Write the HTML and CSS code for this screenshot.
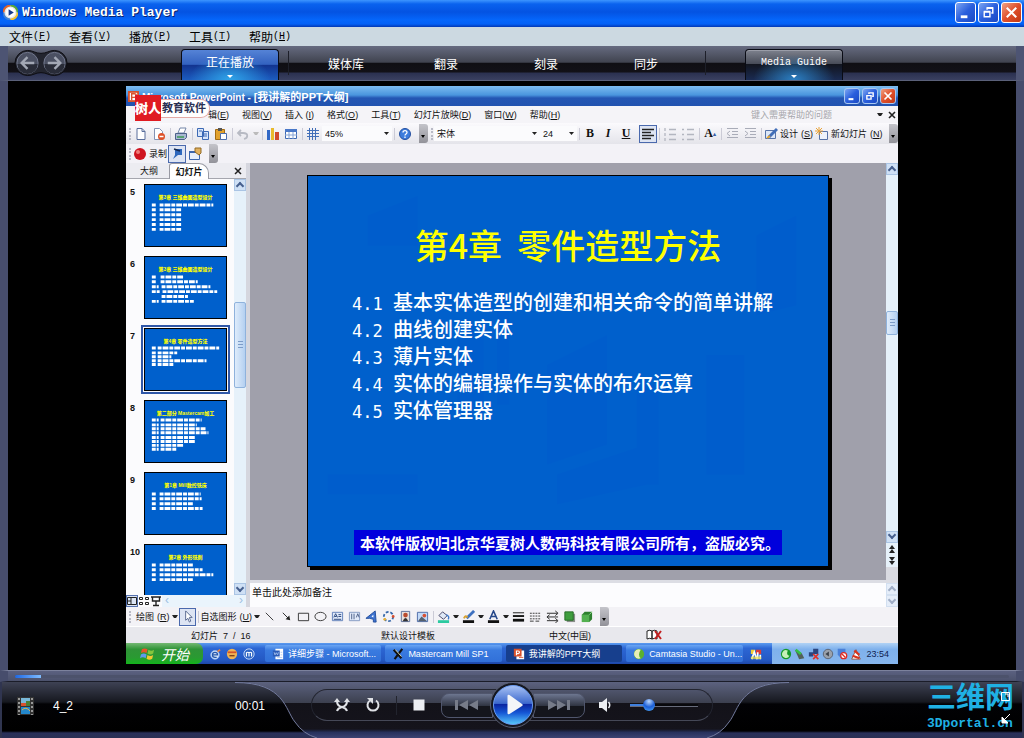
FILE: index.html
```html
<!DOCTYPE html>
<html lang="zh-CN">

<head>
    <meta charset="UTF-8">
    <meta name="viewport" content="width=device-width, initial-scale=1.0">
    <title>Windows Media Player</title>
    <link rel="stylesheet" href="styles.css">
</head>

<body>
    <header class="titlebar">
        <svg class="app-icon" viewBox="0 0 16 16">
            <circle cx="8" cy="8" r="7.5" fill="#e8e8e8" />
            <path d="M8 .5A7.5 7.5 0 0 0 .5 8" fill="none" stroke="#e0652c" stroke-width="2" />
            <path d="M8 .5A7.5 7.5 0 0 1 15.500 8" fill="none" stroke="#58a838" stroke-width="2" />
            <path d="M.5 8a7.500 7.500 0 0 0 7.500 7.500" fill="none" stroke="#3d7fd6" stroke-width="2" />
            <path d="M15.500 8A7.500 7.500 0 0 1 8 15.500" fill="none" stroke="#f0c030" stroke-width="2" />
            <circle cx="8" cy="8" r="5" fill="#fff" />
            <path d="M6 4.500l5.500 3.500L6 11.500z" fill="#173a8c" />
        </svg>
        <h1>Windows Media Player</h1>
        <div class="window-buttons">
            <button aria-label="最小化"><svg viewBox="0 0 20 20"><path d="M5 13h7v3H5z" fill="#fff" /></svg></button>
            <button aria-label="还原"><svg viewBox="0 0 20 20"><path d="M5.500 9.500h6v5h-6zM5 9h7M8.500 7V5.500h6v5H13M8 5h7" fill="none" stroke="#fff" stroke-width="1.500" /></svg></button>
            <button class="close" aria-label="关闭"><svg viewBox="0 0 20 20"><path d="M5 5l10 10M15 5L5 15" stroke="#fff" stroke-width="2.200" /></svg></button>
        </div>
    </header>

    <nav class="menubar">
        <button>文件<span>(<u>F</u>)</span></button>
        <button>查看<span>(<u>V</u>)</span></button>
        <button>播放<span>(<u>P</u>)</span></button>
        <button>工具<span>(<u>T</u>)</span></button>
        <button>帮助<span>(<u>H</u>)</span></button>
    </nav>

    <nav class="features">
        <svg class="history" viewBox="0 0 56 28">
            <path d="M14 1c6 0 8 3 14 3s8-3 14-3a13 13 0 0 1 0 26c-6 0-8-3-14-3s-8 3-14 3a13 13 0 0 1 0-26z" fill="#23252f" stroke="#0c0d12" />
            <circle cx="14" cy="14" r="11" fill="#4b5062" stroke="#757b91" />
            <circle cx="42" cy="14" r="11" fill="#4b5062" stroke="#757b91" />
            <path d="M3.500 15a10.500 10.500 0 0 0 21 0zM31.500 15a10.500 10.500 0 0 0 21 0z" fill="#292c38" />
            <path d="M21 14H8m6-6l-6 6 6 6M35 14h13m-6-6l6 6-6 6" fill="none" stroke="#a3a8b5" stroke-width="2.500" />
        </svg>
        <button class="tab tab-active">正在播放<i></i></button>
        <hr>
        <button class="feature">媒体库</button>
        <button class="feature">翻录</button>
        <button class="feature">刻录</button>
        <button class="feature">同步</button>
        <hr>
        <button class="tab tab-guide">Media Guide<i></i></button>
    </nav>

    <main class="stage">
        <section class="ppt">
            <header class="ppt-title">
                <svg class="ppt-logo" viewBox="0 0 12 12"><path d="M0 0h12v12H0z" fill="#d8532c" /><path d="M2 2h8v8H2z" fill="#fff" /><path d="M4 10V3h3a2 2 0 0 1 0 4H4" fill="none" stroke="#d8532c" stroke-width="1.500" /></svg>
                <h2>Microsoft PowerPoint - <span>[我讲解的PPT大纲]</span></h2>
                <div class="window-buttons small">
                    <button aria-label="最小化"><svg viewBox="0 0 20 20"><path d="M5 13h7v3H5z" fill="#fff" /></svg></button>
                    <button aria-label="还原"><svg viewBox="0 0 20 20"><path d="M5.500 9.500h6v5h-6zM8.500 7V5.500h6v5H13" fill="none" stroke="#fff" stroke-width="2" /></svg></button>
                    <button class="close" aria-label="关闭"><svg viewBox="0 0 20 20"><path d="M5 5l10 10M15 5L5 15" stroke="#fff" stroke-width="2.500" /></svg></button>
                </div>
                <div class="watermark"><b>树人</b><span>教育软件</span></div>
            </header>

            <nav class="ppt-menu">
                <button>辑<span>(<u>E</u>)</span></button>
                <button>视图<span>(<u>V</u>)</span></button>
                <button>插入<span> (<u>I</u>)</span></button>
                <button>格式<span>(<u>O</u>)</span></button>
                <button>工具<span>(<u>T</u>)</span></button>
                <button>幻灯片放映<span>(<u>D</u>)</span></button>
                <button>窗口<span>(<u>W</u>)</span></button>
                <button>帮助<span>(<u>H</u>)</span></button>
                <input class="ask" type="text" placeholder="键入需要帮助的问题" aria-label="键入需要帮助的问题">
                <i class="drop"></i>
                <button class="doc-close" aria-label="关闭窗口"><svg viewBox="0 0 8 8"><path d="M1 1l6 6M7 1L1 7" stroke="#222" stroke-width="1.600" /></svg></button>
            </nav>

            <div class="toolbar">
                <i class="grip"></i>
                <button class="tool" aria-label="新建"><svg viewBox="0 0 14 14"><path d="M3 1.500h5l3 3v8H3z" fill="#fff" stroke="#5a6f9c" /><path d="M8 1.500v3h3" fill="none" stroke="#5a6f9c" /></svg></button>
                <button class="tool" aria-label="权限"><svg viewBox="0 0 14 14"><path d="M2.500 1.500h5l3 3v8h-8z" fill="#fff" stroke="#8493b4" /><circle cx="9.500" cy="9.500" r="3.500" fill="#de5229" /><path d="M7.500 9.500h4" stroke="#fff" stroke-width="1.500" /></svg></button>
                <i class="sep"></i>
                <button class="tool" aria-label="打印"><svg viewBox="0 0 14 14"><path d="M4 6l2-5h6l-2 5z" fill="#fff" stroke="#7486a8" /><path d="M1.500 6.500h11v4l-2 2h-9z" fill="#a9b8d2" stroke="#4c6089" /><path d="M3 10h7" stroke="#3c9a55" stroke-width="1.500" /></svg></button>
                <i class="sep"></i>
                <button class="tool" aria-label="复制"><svg viewBox="0 0 14 14"><path d="M1.500 1.500h6v8h-6zM6.500 4.500h6v8h-6z" fill="#d8e5fa" stroke="#3c69b4" /><path d="M8 7h3M8 9h3M3 4h3" stroke="#3c69b4" /></svg></button>
                <button class="tool" aria-label="粘贴"><svg viewBox="0 0 14 14"><path d="M1.500 2.500h9v10h-9z" fill="#e2a22d" stroke="#a36b12" /><path d="M4 1h4v3H4z" fill="#555" /><path d="M6.500 6.500h6v6h-6z" fill="#fff" stroke="#4c6fae" /></svg></button>
                <i class="sep"></i>
                <button class="tool" aria-label="撤消"><svg viewBox="0 0 14 14"><path d="M2 6h5c6 0 5 5 1 6M5 3L2 6l3 3" fill="none" stroke="#b7bac3" stroke-width="1.800" /></svg></button>
                <i class="drop faded"></i>
                <i class="sep"></i>
                <button class="tool" aria-label="图表"><svg viewBox="0 0 14 14"><path d="M1 3h3v10H1z" fill="#3168c6" /><path d="M5 1h3v12H5z" fill="#e9ba2c" /><path d="M9 5h4v8H9z" fill="#d04a2c" /></svg></button>
                <button class="tool" aria-label="表格"><svg viewBox="0 0 14 14"><path d="M1.500 2.500h11v9h-11z" fill="#fff" stroke="#3e69b2" /><path d="M1 2h12v3H1z" fill="#4a78c8" /><path d="M5 5v7M9 5v7M1 8h12" stroke="#87a5d7" /></svg></button>
                <i class="sep"></i>
                <button class="tool" aria-label="网格"><svg viewBox="0 0 14 14"><path d="M3.500 1v12M6.500 1v12M9.500 1v12M1 3.500h12M1 6.500h12M1 9.500h12" stroke="#426fb8" /></svg></button>
                <select class="zoom" aria-label="显示比例"><option>45%</option></select>
                <i class="sep"></i>
                <button class="tool" aria-label="帮助"><svg viewBox="0 0 14 14"><circle cx="7" cy="7" r="5.500" fill="#3d7ddd" stroke="#244f9f" /><path d="M5 5.500c0-2.500 4-2.500 4 0 0 1.500-2 1.500-2 3M7 9.500V11" fill="none" stroke="#fff" stroke-width="1.300" /></svg></button>
                <i class="more"></i>
                <i class="grip"></i>
                <select class="font" aria-label="字体"><option>宋体</option></select>
                <select class="size" aria-label="字号"><option>24</option></select>
                <i class="sep"></i>
                <button class="tool letter"><b>B</b></button>
                <button class="tool letter"><em>I</em></button>
                <button class="tool letter"><u>U</u></button>
                <button class="tool pressed align" aria-label="左对齐"><svg viewBox="0 0 14 14"><path d="M1 2.500h12M1 5.500h9M1 8.500h12M1 11.500h9" stroke="#222" stroke-width="1.500" /></svg></button>
                <i class="sep"></i>
                <button class="tool" aria-label="编号"><svg viewBox="0 0 14 14"><path d="M6 2.500h7M6 7.500h7M6 12.500h7M2 1v3M2 6v3M2 11v3" stroke="#b3b6c0" stroke-width="1.300" /></svg></button>
                <button class="tool" aria-label="项目符号"><svg viewBox="0 0 14 14"><path d="M6 2.500h7M6 7.500h7M6 12.500h7M1 2.500h2M1 7.500h2M1 12.500h2" stroke="#b3b6c0" stroke-width="1.500" /></svg></button>
                <i class="sep"></i>
                <button class="tool letter" aria-label="增大字号"><b>A</b><sup>▴</sup></button>
                <i class="sep"></i>
                <button class="tool" aria-label="减少缩进"><svg viewBox="0 0 14 14"><path d="M2 1.500h11M7 4.500h6M7 7.500h6M2 10.500h11M5 4L2 6.500 5 9" fill="none" stroke="#a9acb8" /></svg></button>
                <button class="tool" aria-label="增加缩进"><svg viewBox="0 0 14 14"><path d="M2 1.500h11M7 4.500h6M7 7.500h6M2 10.500h11M2 4l3 2.500L2 9" fill="none" stroke="#a9acb8" /></svg></button>
                <i class="sep"></i>
                <button class="tool-text"><svg viewBox="0 0 14 14"><path d="M1.500 3.500h10v8h-10z" fill="#dce7f8" stroke="#5773a8" /><path d="M5 10l8-8" stroke="#416eb8" stroke-width="3" /><path d="M3 11l3-2" stroke="#e3a42f" stroke-width="2" /></svg>设计<span>(<u>S</u>)</span></button>
                <button class="tool-text"><svg viewBox="0 0 14 14"><path d="M4.500 4.500h8v8h-8z" fill="#eef3fc" stroke="#5773a8" /><path d="M4 0v8M0 4h8M1 1l6 6M7 1L1 7" stroke="#e9a43a" /></svg>新幻灯片<span>(<u>N</u>)</span></button>
                <i class="more last"></i>
            </div>

            <div class="record-bar">
                <i class="grip"></i>
                <button class="tool-text"><svg viewBox="0 0 14 14"><circle cx="7" cy="7" r="6" fill="#cf1420" /><circle cx="5" cy="5" r="2" fill="#f07b78" /></svg>录制</button>
                <button class="tool pressed" aria-label="麦克风"><svg viewBox="0 0 14 14"><path d="M5 2h7v6H8L3 12l2-4z" fill="#2e68bd" /><path d="M4 2l6 2" stroke="#13284f" stroke-width="1.500" /></svg></button>
                <button class="tool" aria-label="选项"><svg viewBox="0 0 14 14"><path d="M1.500 4.500h10v8h-10z" fill="#e6eefb" stroke="#3c66ac" /><path d="M1 4h11v2H1z" fill="#3c66ac" /><path d="M7 1h6v5l-2 2-4-3z" fill="#e0b05e" stroke="#936a25" /></svg></button>
                <i class="more"></i>
            </div>

            <div class="workspace">
                <aside class="outline">
                    <div class="outline-tabs">
                        <button>大纲</button>
                        <button class="current">幻灯片</button>
                        <button class="doc-close" aria-label="关闭"><svg viewBox="0 0 8 8"><path d="M1 1l6 6M7 1L1 7" stroke="#222" stroke-width="1.500" /></svg></button>
                    </div>
                    <div class="outline-body">
                        <ol class="thumbs">
                            <li><b>5</b>
                                <div class="thumb">
                                    <h4>第3章 三维曲面造型设计</h4>
                                    <svg viewBox="0 0 83 46"><path d="M7 4h5m3 0h55M7 9h5m3 0h22M7 14h5m3 0h22M7 19h5m3 0h22M7 24h5m3 0h22M7 29h5m3 0h22" /></svg>
                                </div>
                            </li>
                            <li><b>6</b>
                                <div class="thumb">
                                    <h4>第3章 三维曲面造型设计</h4>
                                    <svg viewBox="0 0 83 46"><path d="M7 4h5m4 0h23M7 9h5m4 0h38M7 14h7m3 0h50M7 19h8m3 0h56M17 24h27M7 29h7m3 0h33" /></svg>
                                </div>
                            </li>
                            <li class="selected"><b>7</b>
                                <div class="thumb">
                                    <h4>第4章 零件造型方法</h4>
                                    <svg viewBox="0 0 83 46"><path d="M7 3h4m2 0h63M7 8h4m2 0h20M7 12h4m2 0h14M7 16h4m2 0h50M7 20h4m2 0h16" /></svg>
                                </div>
                            </li>
                            <li><b>8</b>
                                <div class="thumb">
                                    <h4>第二部分 Mastercam加工</h4>
                                    <svg viewBox="0 0 83 46"><path d="M7 3h7m2 0h42M7 8h7m2 0h37M7 12h7m2 0h46M7 16h7m2 0h49M7 21h7m2 0h36M7 25h7m2 0h36M7 29h7m2 0h24M7 33h7m2 0h17" /></svg>
                                </div>
                            </li>
                            <li><b>9</b>
                                <div class="thumb">
                                    <h4>第1章 Mill数控铣床</h4>
                                    <svg viewBox="0 0 83 46"><path d="M7 5h5m3 0h42M7 10h5m3 0h43M7 15h5m3 0h34M7 20h5m3 0h44" /></svg>
                                </div>
                            </li>
                            <li><b>10</b>
                                <div class="thumb">
                                    <h4>第2章 外形铣削</h4>
                                    <svg viewBox="0 0 83 46"><path d="M7 4h5m3 0h34M7 9h5m3 0h44M7 14h5m3 0h55M7 19h5m3 0h34" /></svg>
                                </div>
                            </li>
                        </ol>
                        <div class="scroll">
                            <button class="up" aria-label="向上"></button>
                            <i class="space-a"></i><i class="handle"></i><i class="space-b"></i>
                            <button class="down" aria-label="向下"></button>
                        </div>
                    </div>
                    <div class="views">
                        <button class="on" aria-label="普通视图"><svg viewBox="0 0 12 12"><path d="M1.500 2.500h9v7h-9zM5 2v8M2 6h3" fill="none" stroke="#222" /></svg></button>
                        <button aria-label="浏览视图"><svg viewBox="0 0 12 12"><path d="M1.500 2.500h3v2h-3zM7.500 2.500h3v2h-3zM1.500 7.500h3v2h-3zM7.500 7.500h3v2h-3z" fill="none" stroke="#222" /></svg></button>
                        <button aria-label="放映"><svg viewBox="0 0 12 12"><path d="M1 2h10M2.500 2v4h7V2M6 6v4M3 10.500h6" fill="none" stroke="#222" stroke-width="1.400" /></svg></button>
                        <div class="hscroll"><span>‹</span><span>›</span></div>
                    </div>
                </aside>

                <div class="editor">
                    <div class="canvas-row">
                        <div class="canvas">
                            <article class="slide">
                                <svg class="slide-texture" viewBox="0 0 522 392" preserveAspectRatio="none">
                                    <path d="M150 150h26v90h-26zM190 120h12v110h-12zM240 190l60-30v110l-60 20zM330 210h22v100h-22zM400 180h38v120h-38zM450 60l40-20v90l-40 10zM60 40l50-20v50H60zM250 300l90-30v40l-90 20zM20 300h90v20H20z" />
                                </svg>
                                <h3>第4章  零件造型方法</h3>
                                <ul>
                                    <li><span>4.1 </span>基本实体造型的创建和相关命令的简单讲解</li>
                                    <li><span>4.2 </span>曲线创建实体</li>
                                    <li><span>4.3 </span>薄片实体</li>
                                    <li><span>4.4 </span>实体的编辑操作与实体的布尔运算</li>
                                    <li><span>4.5 </span>实体管理器</li>
                                </ul>
                                <p class="notice">本软件版权归北京华夏树人数码科技有限公司所有，盗版必究。</p>
                            </article>
                        </div>
                        <div class="scroll main-scroll">
                            <button class="up" aria-label="向上"></button>
                            <i class="space-a"></i><i class="handle"></i><i class="space-b"></i>
                            <button class="down" aria-label="向下"></button>
                            <button class="jump" aria-label="上一张"><svg viewBox="0 0 10 10"><path d="M2 5l3-4 3 4zM2 9l3-4 3 4z" fill="#222" /></svg></button>
                            <button class="jump" aria-label="下一张"><svg viewBox="0 0 10 10"><path d="M2 1l3 4 3-4zM2 5l3 4 3-4z" fill="#222" /></svg></button>
                            <i class="stub"></i>
                        </div>
                    </div>
                    <div class="notes">
                        <p>单击此处添加备注</p>
                        <div class="scroll faint">
                            <button class="up" aria-label="向上"></button>
                            <button class="down" aria-label="向下"></button>
                        </div>
                    </div>
                </div>
            </div>

            <div class="draw-bar">
                <i class="grip"></i>
                <button class="tool-text">绘图<span>(<u>R</u>)</span></button><i class="drop"></i>
                <button class="tool pressed" aria-label="选择"><svg viewBox="0 0 14 14"><path d="M5 1v10l2.500-2L9 13l1.500-1L9 8h3z" fill="#fff" stroke="#54648c" /></svg></button>
                <i class="sep"></i>
                <button class="tool-text">自选图形<span>(<u>U</u>)</span></button><i class="drop"></i>
                <button class="tool" aria-label="直线"><svg viewBox="0 0 14 14"><path d="M3 3l8 8" stroke="#333" /></svg></button>
                <button class="tool" aria-label="箭头"><svg viewBox="0 0 14 14"><path d="M3 3l6 6" stroke="#222" /><path d="M11 11L6 10l4-4z" fill="#222" /></svg></button>
                <button class="tool" aria-label="矩形"><svg viewBox="0 0 14 14"><path d="M1.500 3.500h11v8h-11z" fill="none" stroke="#333" /></svg></button>
                <button class="tool" aria-label="椭圆"><svg viewBox="0 0 14 14"><ellipse cx="7" cy="7" rx="6" ry="4.500" fill="none" stroke="#333" /></svg></button>
                <button class="tool" aria-label="文本框"><svg viewBox="0 0 14 14"><path d="M1.500 2.500h11v9h-11z" fill="#e1eafa" stroke="#5e7db8" /><path d="M3 8l2-4 2 4M4 7h2M8 5h3M8 7h3M3 10h8" fill="none" stroke="#26437a" /></svg></button>
                <button class="tool" aria-label="竖排文本框"><svg viewBox="0 0 14 14"><path d="M1.500 2.500h11v9h-11z" fill="#e1eafa" stroke="#8398c0" /><path d="M4 4v6M6.500 4v6M9 8l1.500-4L12 8" fill="none" stroke="#4a5d85" /></svg></button>
                <button class="tool" aria-label="艺术字"><svg viewBox="0 0 14 14"><path d="M1 9L11 1l1 12H9V10L5 9z" fill="#3c72d0" stroke="#234d9a" /><path d="M7 7l2-2v3z" fill="#fff" /></svg></button>
                <button class="tool" aria-label="图示"><svg viewBox="0 0 14 14"><circle cx="7" cy="7" r="5" fill="none" stroke="#3567a9" stroke-width="2" stroke-dasharray="3 2" /><circle cx="12" cy="7" r="1.500" fill="#d84e2e" /><circle cx="3" cy="10" r="1.500" fill="#e9b032" /></svg></button>
                <button class="tool" aria-label="剪贴画"><svg viewBox="0 0 14 14"><path d="M2.500 1.500h9v11h-9z" fill="#e8e0dc" stroke="#5b6f9b" /><circle cx="7" cy="5.500" r="2.500" fill="#b94b2e" /><path d="M4 12q3-7 6 0z" fill="#333" /></svg></button>
                <button class="tool" aria-label="图片"><svg viewBox="0 0 14 14"><path d="M1.500 2.500h11v10h-11z" fill="#c3daf8" stroke="#4c6aa8" /><path d="M2 12l4-5 6 5z" fill="#55606e" /><circle cx="9" cy="6" r="2" fill="#d85134" /></svg></button>
                <i class="sep"></i>
                <button class="tool" aria-label="填充颜色"><svg viewBox="0 0 14 14"><path d="M2 6l4-4 5 4-4 4z" fill="#dfe8f6" stroke="#446" /><path d="M10 5q4 2 2 5" stroke="#3b77c9" stroke-width="1.500" fill="none" /><path d="M1 11h12v3H1z" fill="#2bcaa0" /></svg></button><i class="drop"></i>
                <button class="tool" aria-label="线条颜色"><svg viewBox="0 0 14 14"><path d="M5 9l8-8" stroke="#3d70bf" stroke-width="3" /><path d="M2 9q2-4 4-1" stroke="#daa331" stroke-width="2" fill="none" /><path d="M1 11h12v3H1z" fill="#111" /></svg></button><i class="drop"></i>
                <button class="tool" aria-label="字体颜色"><svg viewBox="0 0 14 14"><path d="M3 10l4-9 4 9M4.500 7h5" fill="none" stroke="#26488a" stroke-width="1.700" /><path d="M1 11h12v3H1z" fill="#111" /></svg></button><i class="drop"></i>
                <button class="tool" aria-label="线型"><svg viewBox="0 0 14 14"><path d="M1 3h12" stroke="#111" /><path d="M1 6.500h12" stroke="#111" stroke-width="2" /><path d="M1 11h12" stroke="#111" stroke-width="3" /></svg></button>
                <button class="tool" aria-label="虚线"><svg viewBox="0 0 14 14"><path d="M1 3.500h12M1 6.500h12M1 9.500h12" stroke="#333" stroke-dasharray="2 1" /><path d="M1 12h12" stroke="#333" stroke-dasharray="4 2" /></svg></button>
                <button class="tool" aria-label="箭头样式"><svg viewBox="0 0 14 14"><path d="M1 3.500h11M2 7.500h11M1 11.500h11M10 1l3 2.500L10 6M4 5L1 7.500 4 10M10 9l3 2.500-3 2.500" fill="none" stroke="#222" /></svg></button>
                <button class="tool" aria-label="阴影"><svg viewBox="0 0 14 14"><path d="M4 4h9v9H4z" fill="#8b8f8b" /><path d="M2 2h9v9H2z" fill="#3f9d3e" stroke="#236a24" /></svg></button>
                <button class="tool" aria-label="三维"><svg viewBox="0 0 14 14"><path d="M2 5l3-3h8v8l-3 3H2z" fill="#2d7f2e" /><path d="M2 5h8v8H2z" fill="#53b050" /><path d="M10 5l3-3" stroke="#9ada95" /></svg></button>
                <i class="more"></i>
            </div>

            <footer class="status">
                <span>幻灯片  7  /  16</span>
                <span>默认设计模板</span>
                <span>中文(中国)</span>
                <svg viewBox="0 0 16 12"><path d="M1 2q3-1.500 5 0v8q-2-1.500-5 0zM6 2q3-1.500 5 0v8q-2-1.500-5 0z" fill="#fff" stroke="#222" /><path d="M9 2l6 8M15 2L9 10" stroke="#c21f1f" stroke-width="2" /></svg>
            </footer>

            <footer class="taskbar">
                <button class="start"><svg viewBox="0 0 16 14"><path d="M2 2q3-2 6 0L7 6Q4 4 1 6z" fill="#e8552b" /><path d="M9 2.500q3 2 6 0l-1 4q-3 2-6 0z" fill="#84c63d" /><path d="M1 7.500q3-2 6 0l-1 4q-3-2-6 0z" fill="#5f9bf0" /><path d="M8 8q3 2 6 0l-1 4q-3 2-6 0z" fill="#f3c832" /></svg>开始</button>
                <div class="quick">
                    <svg viewBox="0 0 14 14"><circle cx="7" cy="8" r="5" fill="#dce9fb" stroke="#8fb8f0" /><path d="M4 8h6q0-3-3-3T4 8q0 3 3 3h2" fill="none" stroke="#2558ad" stroke-width="1.500" /><path d="M10 4l3-2" stroke="#f0803a" stroke-width="2" /></svg>
                    <svg viewBox="0 0 14 14"><circle cx="7" cy="7" r="6" fill="#f0b352" /><path d="M2 4h10v2H2z" fill="#d4532a" /><path d="M4 9h6" stroke="#7a3a14" stroke-width="1.500" /></svg>
                    <svg viewBox="0 0 14 14"><circle cx="7" cy="7" r="6" fill="#2f66c4" stroke="#dce9ff" /><path d="M4 10V5.500q1.500-1 3 0V10M7 5.500q1.500-1 3 0V10" fill="none" stroke="#fff" stroke-width="1.300" /></svg>
                </div>
                <div class="tasks">
                    <button><svg viewBox="0 0 14 14"><path d="M4 1h9v12H4z" fill="#fff" /><path d="M1 3h8v7H1z" fill="#2b5cb8" /><path d="M2.500 5l1 3L5 5.500 6.500 8l1-3M10 5h2M10 8h2M6 11h6" fill="none" stroke="#aac4f0" /></svg>详细步骤 - Microsoft...</button>
                    <button><svg viewBox="0 0 14 14"><path d="M2 2l9 10M12 1L3 13" stroke="#111" stroke-width="2.500" /><path d="M4 2l7 8" stroke="#e9e2a8" /></svg>Mastercam Mill SP1</button>
                    <button class="active"><svg viewBox="0 0 14 14"><path d="M4 3h9v10H4z" fill="#fff" /><path d="M1 1h9v9H1z" fill="#d9532d" /><path d="M4 8.500v-5h2a1.500 1.500 0 0 1 0 3H4" fill="none" stroke="#fff" stroke-width="1.300" /><path d="M7 11h5" stroke="#d9532d" /></svg>我讲解的PPT大纲</button>
                    <button><svg viewBox="0 0 14 14"><circle cx="7" cy="7" r="6" fill="#5bb12f" /><path d="M9 2a5.500 5.500 0 1 0 0 10q-4-4 0-10z" fill="#e7efb8" /></svg>Camtasia Studio - Un...</button>
                </div>
                <svg class="lang" viewBox="0 0 14 14"><path d="M1 2h5v5H1z" fill="#f2cf36" /><path d="M7 2h6v5H7z" fill="#dc3b34" /><path d="M2 13l3-8 3 8M9 5v8M12 8v5" fill="none" stroke="#fff" stroke-width="2" /><path d="M1 10h12v3H1z" fill="#f0e042" opacity=".7" /></svg>
                <div class="tray">
                    <svg viewBox="0 0 14 14"><circle cx="7" cy="7" r="6" fill="#159a28" /><path d="M9 3a4.500 4.500 0 1 0 2 6q-4 0-2-6z" fill="#c6f0b8" /></svg>
                    <svg viewBox="0 0 14 14"><path d="M1 2l8 4 3 6-6 1z" fill="#53605a" /><path d="M2 2l6 5" stroke="#34c045" stroke-width="3" /></svg>
                    <svg viewBox="0 0 14 14"><path d="M1 5h5v5H1zM6 1h6v6H6z" fill="#2b457f" /><path d="M6 7l6 6M12 7l-6 6" stroke="#e03228" stroke-width="2" /></svg>
                    <svg viewBox="0 0 14 14"><circle cx="7" cy="7" r="5.500" fill="#9aa1ab" stroke="#565e6b" /><path d="M4 7l4-3v6z" fill="#3b414a" /></svg>
                    <svg viewBox="0 0 14 14"><path d="M2 1h9v7l-4 5-5-5z" fill="#4a80d8" /><circle cx="9" cy="9" r="3.500" fill="#fff" stroke="#de2c23" stroke-width="1.500" /><path d="M7 7l4 4" stroke="#de2c23" stroke-width="1.500" /></svg>
                    <svg viewBox="0 0 14 14"><path d="M2 13l5-11 5 11z" fill="#fff" stroke="#8a4a3a" /><path d="M5 3l6 5M3 9l8 3" stroke="#d8341f" stroke-width="2.500" /></svg>
                    <time>23:54</time>
                </div>
            </footer>
        </section>
    </main>

    <div class="seek"><input type="range" min="0" max="100" value="3" aria-label="进度"></div>

    <footer class="deck">
        <svg class="deck-shape" viewBox="0 0 554 56">
            <defs>
                <linearGradient id="deckFill" x1="0" y1="0" x2="0" y2="1">
                    <stop offset="0" stop-color="#5c627f" />
                    <stop offset=".37" stop-color="#3c404f" />
                    <stop offset=".38" stop-color="#131219" />
                    <stop offset=".84" stop-color="#15141c" />
                    <stop offset=".9" stop-color="#27315c" />
                    <stop offset="1" stop-color="#3c4372" />
                </linearGradient>
            </defs>
            <path d="M0 0C50 0 50 28 60 40Q68 52 82 56H472Q486 52 494 40C504 28 504 0 554 0z" fill="url(#deckFill)" />
            <path d="M0 .5C50 .5 50 28 60 40Q68 52 82 56M472 56Q486 52 494 40C504 28 504 .5 554 .5" fill="none" stroke="#737b9e" />
        </svg>
        <div class="now">
            <svg viewBox="0 0 17 18"><path d="M0 0h17v18H0z" fill="#333" /><path d="M4 1h9v8H4z" fill="#79b8d8" /><path d="M4 10h9v7H4z" fill="#2387cc" /><path d="M4 6h5v3H4z" fill="#d9512e" /><path d="M9 4h4v5H9z" fill="#4a7c36" /><path d="M5 13q4-4 8 1" fill="none" stroke="#d8b052" /><path d="M2 1v17M15 1v17" stroke="#999" stroke-width="2" stroke-dasharray="2 2" /></svg>
            <span>4_2</span>
            <time>00:01</time>
        </div>
        <div class="transport">
            <button class="plain" aria-label="无序播放"><svg viewBox="0 0 20 20"><path d="M5 6q0 5 5 6 4 1 5 4M15 6q0 5-5 6-4 1-5 4" fill="none" stroke="#dfe1e6" stroke-width="2" /><path d="M2 7l3-4 3 4zM12 7l3-4 3 4z" fill="#dfe1e6" /></svg></button>
            <button class="plain" aria-label="重复"><svg viewBox="0 0 20 20"><path d="M13 5.500a5.500 5.500 0 1 1-6 0" fill="none" stroke="#dfe1e6" stroke-width="2" /><path d="M4 3h6v6z" fill="#dfe1e6" /></svg></button>
            <i class="split"></i>
            <button class="plain" aria-label="停止"><svg viewBox="0 0 20 20"><path d="M4.500 4.500h11v11h-11z" fill="#eceef2" /></svg></button>
            <button class="skip prev" aria-label="上一个"><svg viewBox="0 0 24 12"><path d="M0 1h3v10H0zM13 1v10L4 6zM23 1v10l-9-5z" fill="#777c89" /></svg></button>
            <button class="play" aria-label="播放">
                <svg viewBox="0 0 46 46">
                    <defs>
                        <linearGradient id="orb" x1="0" y1="0" x2="0" y2="1">
                            <stop offset="0" stop-color="#a9c3f5" />
                            <stop offset=".46" stop-color="#3c68cd" />
                            <stop offset=".48" stop-color="#0a24a0" />
                            <stop offset=".7" stop-color="#1657d5" />
                            <stop offset="1" stop-color="#58cbfb" />
                        </linearGradient>
                    </defs>
                    <circle cx="23" cy="23" r="22.500" fill="#151720" stroke="#5b6075" />
                    <circle cx="23" cy="23" r="19.500" fill="url(#orb)" stroke="#6b9bf0" />
                    <path d="M17.500 14q0-2 2-1L32 22q1.500 1 0 2l-12.500 8q-2 1-2-1z" fill="#f4f5f8" />
                </svg>
            </button>
            <button class="skip next" aria-label="下一个"><svg viewBox="0 0 24 12"><path d="M1 1v10l9-5zM10 1v10l9-5zM20 1h3v10h-3z" fill="#777c89" /></svg></button>
            <button class="plain volume-icon" aria-label="静音"><svg viewBox="0 0 20 20"><path d="M4 7h3l5-4v14l-5-4H4z" fill="#eceef2" /><path d="M13.500 7q2.500 3 0 6" fill="none" stroke="#eceef2" stroke-width="1.500" /></svg></button>
            <input class="volume" type="range" min="0" max="100" value="24" aria-label="音量">
        </div>
        <div class="brand">
            <strong>三维网</strong>
            <span>3Dportal.cn</span>
            <svg viewBox="0 0 12 34"><path d="M1.500 1.500h8v8h-8zM5 3h3v3" fill="none" stroke="#fff" /><path d="M10 23l-6 6M2 26v6h6z" fill="#fff" stroke="#fff" /></svg>
        </div>
    </footer>
</body>

</html>
```

FILE: styles.css
```css
* {
    box-sizing: border-box;
}

body {
    margin: 0;
    height: 100vh;
    min-height: 600px;
    display: flex;
    flex-direction: column;
    overflow: hidden;
    background-color: #000;
    font-family: "Liberation Sans", "Noto Sans CJK SC", sans-serif;
    font-size: 12px;
}

button,
input,
select {
    font: inherit;
    color: inherit;
    margin: 0;
    padding: 0;
    border: none;
    background: none;
    border-radius: 0;
}

button {
    display: flex;
    align-items: center;
    justify-content: center;
    white-space: nowrap;
}

h1, h2, h3, h4, p, ul, ol {
    margin: 0;
    padding: 0;
    list-style: none;
}

svg {
    display: block;
    flex: none;
}

/* Player window */
.titlebar {
    display: flex;
    align-items: center;
    flex: none;
    height: 27px;
    padding: 0 2px 2px 3px;
    color: white;
    background: linear-gradient(#3d95ff 0, #0a62ee 4px, #0453e2 12px, #0566fb 20px, #0461f6 24px, #0338b4 27px);
}

.app-icon {
    width: 15px;
    height: 15px;
}

.titlebar h1 {
    flex: 1;
    margin-left: 4px;
    font-family: "Liberation Mono", monospace;
    font-size: 13px;
    text-shadow: 1px 1px 0 #06256e;
}

.window-buttons {
    display: flex;
    gap: 2px;
}

.window-buttons button {
    width: 21px;
    height: 21px;
    border: 1px solid #fff;
    border-radius: 3px;
    background: linear-gradient(135deg, #7da6f2, #2a5fdd 50%, #1a49c4);
}

.window-buttons .close {
    background: linear-gradient(135deg, #f0a284, #e0502c 50%, #c03814);
}

.window-buttons svg {
    width: 19px;
    height: 19px;
}

.menubar {
    display: flex;
    flex: none;
    height: 19px;
    padding-left: 9px;
    background-color: #ccd9e1;
}

.menubar button {
    width: 60px;
    justify-content: flex-start;
}

.menubar span {
    font-family: "Liberation Mono", monospace;
    font-size: 10px;
}

.features {
    display: flex;
    align-items: center;
    flex: none;
    height: 35px;
    padding-left: 6px;
    color: white;
    border: solid #4d5473;
    border-width: 0 8px;
    border-bottom: 1px solid #5a6079;
    background: linear-gradient(#666b80, #40434f 48%, #0f0e13 50%, #121117 76%, #2b3150 80%, #3a4060);
}

.features hr {
    width: 1px;
    height: 24px;
    margin: 0;
    border: none;
    background-color: #1d1f29;
}

.history {
    width: 54px;
    height: 28px;
}

.tab {
    flex-direction: column;
    align-self: flex-end;
    width: 98px;
    height: 31px;
    gap: 4px;
    padding-top: 5px;
    border: 1px solid #090b14;
    border-bottom: none;
    border-radius: 4px 4px 0 0;
    line-height: 16px;
}

.tab i {
    width: 0;
    border: 3px solid transparent;
    border-top: 3px solid #fff;
}

.tab-active {
    margin: 0 9px 0 113px;
    background: radial-gradient(ellipse at bottom, #2fa4e8, transparent 60%), linear-gradient(#5583d6, #3362c0 48%, #12338f 50%, #1c5cc0);
}

.tab-guide {
    margin-left: 39px;
    font-family: "Liberation Mono", monospace;
    font-size: 10px;
    box-shadow: inset 0 1px 0 #9a9da8;
    background: radial-gradient(ellipse at bottom, #2b7fc2, transparent 60%), linear-gradient(#7e828e, #484c58 46%, #12151f 48%, #1a2b52);
}

.feature {
    width: 100px;
    height: 30px;
}

.features hr + .feature {
    margin-left: 7px;
}

.feature + hr {
    margin-left: 9px;
}

.stage {
    display: flex;
    flex: 1;
    min-height: 0;
    padding: 5px 118px 6px;
    border: solid #474d6c;
    border-width: 0 8px;
    background-color: #000;
}

/* PowerPoint window shown in the video */
.ppt {
    display: flex;
    flex-direction: column;
    flex: 1;
    min-width: 0;
    color: #111;
    background-color: #f5f4f8;
    font-size: 9px;
}

.ppt-title {
    position: relative;
    display: flex;
    align-items: center;
    flex: none;
    height: 20px;
    padding: 0 2px;
    color: white;
    background: linear-gradient(#7dbcf0, #4a95de 45%, #2456b4 60%, #2253b0);
}

.ppt-logo {
    width: 11px;
    height: 11px;
}

.ppt-title h2 {
    flex: 1;
    margin-left: 3px;
    font-size: 10px;
}

.ppt-title h2 span {
    font-size: 11px;
}

.window-buttons.small button {
    width: 16px;
    height: 16px;
    border-color: #a9c8f2;
}

.window-buttons.small svg {
    width: 14px;
    height: 14px;
}

/* Publisher badge over the first menus */
.watermark {
    position: absolute;
    left: 9px;
    top: 9px;
    display: flex;
    align-items: center;
    height: 26px;
}

.watermark b {
    width: 26px;
    height: 26px;
    font-family: "Noto Sans CJK SC", sans-serif;
    font-size: 13px;
    font-weight: 900;
    line-height: 25px;
    text-align: center;
    white-space: nowrap;
    background-color: #e01b22;
}

.watermark span {
    padding: 0 3px 0 1px;
    border: 1px solid #e4aaa5;
    border-left: none;
    border-radius: 0 9px 9px 0;
    color: #2a2f52;
    background-color: #fff;
    font-size: 11px;
    font-weight: bold;
    line-height: 17px;
}

.ppt-menu {
    display: flex;
    align-items: center;
    flex: none;
    height: 17px;
    padding: 0 2px 0 82px;
}

.ppt-menu button {
    margin-right: 13px;
}

.ppt span {
    white-space: pre;
}

.ask {
    flex: 1;
    min-width: 0;
    text-align: right;
    margin-right: 44px;
}

.ask::placeholder {
    color: #a5a6ab;
}

.ppt-menu .doc-close {
    margin: 0 0 0 4px;
}

.doc-close svg {
    width: 8px;
    height: 8px;
}

.toolbar,
.record-bar,
.draw-bar {
    display: flex;
    align-items: center;
    flex: none;
    background: linear-gradient(#fbfafd, #e4e4ea);
}

.toolbar {
    height: 21px;
}

.record-bar {
    height: 19px;
    background: #f3f2f7;
}

.draw-bar {
    height: 19px;
    background: #f3f2f6;
}

.grip {
    width: 2px;
    height: 12px;
    margin: 0 1px 0 3px;
    border-left: 2px dotted #b9bac6;
}

.sep {
    width: 1px;
    height: 12px;
    margin: 0 1px 0 2px;
    background-color: #cbcbd6;
}

.drop {
    width: 6px;
    margin: 0 1px;
    border: 2px solid transparent;
    border-top: 3px solid #222;
    border-bottom: none;
}

.faded {
    border-top-color: #bbb;
}

.tool {
    flex: none;
    width: 18px;
    height: 18px;
}

.tool svg,
.tool-text svg {
    width: 14px;
    height: 14px;
}

.draw-bar .tool {
    width: 17px;
}

.draw-bar .tool svg {
    width: 13px;
    height: 13px;
}

.tool-text {
    gap: 2px;
    padding: 0 1px;
}

.tool-text span {
    margin-left: 1px;
}

.pressed {
    border: 1px solid #4a69ad;
    background-color: #dde4f3;
}

.align {
    margin-left: 4px;
}

.letter {
    font-family: "Liberation Serif", serif;
    font-size: 12px;
    font-weight: bold;
}

.letter sup {
    font-size: 6px;
    color: #365da8;
}

.more {
    width: 9px;
    height: 19px;
    margin-left: 5px;
    border-radius: 0 3px 3px 0;
    background: linear-gradient(#c4c4ca, #929299);
    position: relative;
}

.more::after {
    content: "";
    position: absolute;
    left: 2px;
    bottom: 3px;
    border: 2px solid transparent;
    border-top: 3px solid #000;
}

.more.last {
    margin-left: auto;
}

.ppt select {
    appearance: none;
    height: 15px;
    padding-left: 3px;
    background: #fbfbfd url("data:image/svg+xml,%3Csvg xmlns='http://www.w3.org/2000/svg' width='5' height='3'%3E%3Cpath d='M0 0h5L2.500 3z' fill='%23222'/%3E%3C/svg%3E") no-repeat right 3px center;
}

.zoom {
    width: 70px;
}

.font {
    width: 106px;
}

.size {
    width: 37px;
}

.workspace {
    display: flex;
    flex: 1;
    min-height: 0;
}

.outline {
    display: flex;
    flex-direction: column;
    flex: none;
    width: 124px;
    border-right: 4px solid #d5d6de;
    background-color: #fbfbfd;
}

.outline-tabs {
    display: flex;
    flex: none;
    height: 16px;
    padding: 0 4px 0 3px;
    border-bottom: 1px solid #a5a6ae;
    background-color: #ececf1;
}

.outline-tabs button {
    width: 40px;
}

.outline-tabs .current {
    height: 16px;
    border: 1px solid #999aa3;
    border-bottom: none;
    border-radius: 3px 10px 0 0;
    background-color: #fff;
    font-weight: bold;
}

.outline-tabs .doc-close {
    width: auto;
    margin-left: auto;
}

.outline-body {
    display: flex;
    flex: 1;
    min-height: 0;
}

.thumbs {
    flex: 1;
    padding: 5px 0 0 5px;
    overflow: hidden;
}

.thumbs li {
    display: flex;
    gap: 2px;
    margin-bottom: 9px;
}

.thumbs b {
    width: 11px;
    padding-top: 3px;
    white-space: nowrap;
    text-indent: -1px;
}

.thumb {
    width: 83px;
    height: 63px;
    padding-top: 8px;
    border: 1px solid #000;
    background-color: #0060cc;
}

.thumb h4 {
    color: #ff0;
    font-size: 5px;
    font-weight: 900;
    line-height: 8px;
    text-align: center;
    white-space: nowrap;
}

.thumb svg {
    width: 81px;
    height: 45px;
}

.thumb path {
    fill: none;
    stroke: #fff;
    stroke-width: 3;
    stroke-dasharray: 4 1 6 1;
}

.selected .thumb {
    outline: 2px solid #2f57a8;
    outline-offset: 1px;
}

.scroll {
    display: flex;
    flex-direction: column;
    flex: none;
    width: 12px;
    background-color: #e6f1fa;
}

.scroll .up,
.scroll .down {
    height: 12px;
    border: 1px solid #aac4e4;
    background-color: #cfe0f5;
}

.scroll .up::before,
.scroll .down::before {
    content: "";
    width: 4px;
    height: 4px;
    margin-top: 2px;
    border: solid #47608f;
    border-width: 2px 0 0 2px;
    transform: rotate(45deg);
}

.scroll .down::before {
    margin: -3px 0 0;
    transform: rotate(225deg);
}

.handle {
    flex: 85;
    border: 1px solid #8fb2dc;
    border-radius: 2px;
    background: repeating-linear-gradient(#7d9cc8 0 1px, transparent 1px 3px) center / 5px 7px no-repeat, linear-gradient(90deg, #dfecfb, #b4d0f1);
}

.space-a {
    flex: 112;
}

.space-b {
    flex: 197;
}

.views {
    display: flex;
    flex: none;
    height: 12px;
}

.views button {
    width: 12px;
    height: 12px;
}

.views .on {
    outline: 1px solid #5672b0;
    outline-offset: -1px;
    background-color: #dbe4f4;
}

.views svg {
    width: 12px;
    height: 12px;
}

.hscroll {
    display: flex;
    justify-content: space-between;
    flex: 1;
    padding: 0 3px;
    color: #9dbfe2;
    background-color: #eaf4fc;
    font-size: 12px;
    line-height: 10px;
}

.editor {
    display: flex;
    flex-direction: column;
    flex: 1;
    min-width: 0;
}

.canvas-row {
    display: flex;
    flex: 1;
    min-height: 0;
}

.canvas {
    display: flex;
    flex: 1;
    min-width: 0;
    padding: 12px 57px 13px;
    background-color: #a0a0ab;
}

.main-scroll .space-a {
    flex: 136;
}

.main-scroll .handle {
    flex: 22;
}

.main-scroll .space-b {
    flex: 197;
}

.jump {
    height: 12px;
}

.jump svg {
    width: 10px;
    height: 10px;
}

.stub {
    height: 13px;
    background-color: #d9dae1;
}

.slide {
    position: relative;
    display: flex;
    flex-direction: column;
    flex: 1;
    min-width: 0;
    padding: 49px 0 11px;
    border: 1px solid #000;
    color: white;
    background-color: #0060cc;
    box-shadow: 3px 3px 0 #000;
    font-family: "Noto Sans CJK SC", sans-serif;
}

.slide-texture {
    position: absolute;
    inset: 0;
    width: 100%;
    height: 100%;
    fill: #0058cf;
    opacity: .3;
}

.slide h3 {
    position: relative;
    color: #ff0;
    font-size: 34px;
    font-weight: 500;
    line-height: 40px;
    text-align: center;
    white-space: pre;
}

.slide ul {
    position: relative;
    margin-top: 23px;
    padding-left: 44px;
    font-size: 20px;
    font-weight: 500;
    line-height: 27px;
    white-space: nowrap;
}

.slide li {
    height: 27px;
}

.slide li span {
    font-family: "DejaVu Sans Mono", monospace;
    font-size: 17px;
}

.notice {
    position: relative;
    align-self: center;
    margin-top: auto;
    padding: 0 2px 0 6px;
    background-color: #0000dc;
    font-size: 15px;
    font-weight: bold;
    line-height: 25px;
    white-space: nowrap;
}

.notes {
    display: flex;
    flex: none;
    justify-content: space-between;
    height: 27px;
    border-top: 3px solid #dcdde4;
    background-color: #fcfcfe;
}

.notes p {
    padding-left: 2px;
    font-size: 10px;
    line-height: 20px;
}

.faint {
    opacity: .5;
}

.draw-bar .grip {
    margin-right: 4px;
}

.status {
    display: grid;
    grid-template-columns: 190px 168px 97px auto;
    align-items: center;
    justify-content: start;
    flex: none;
    height: 17px;
    padding-left: 65px;
    border-top: 1px solid #fff;
    background-color: #e8e8ed;
}

.status svg {
    width: 16px;
    height: 12px;
}

.taskbar {
    display: flex;
    flex: none;
    height: 21px;
    color: white;
    background: linear-gradient(#5b9bf0, #2c66d4 25%, #2459c4 80%, #1d47a8);
}

.start {
    flex: none;
    width: 77px;
    gap: 6px;
    border-radius: 0 7px 7px 0;
    background: linear-gradient(#74b873, #2f9437 30%, #2a9a32 70%, #13b51b);
    font-size: 14px;
    font-style: italic;
}

.start svg {
    width: 15px;
    height: 14px;
}

.quick {
    display: flex;
    align-items: center;
    flex: none;
    gap: 5px;
    padding: 0 10px 0 6px;
}

.quick svg,
.tasks svg,
.lang,
.tray svg {
    width: 12px;
    height: 12px;
}

.tasks {
    display: flex;
    flex: 1;
    gap: 4px;
    padding: 2px 0;
    min-width: 0;
}

.tasks button {
    flex: 1;
    min-width: 0;
    gap: 4px;
    padding-left: 7px;
    justify-content: flex-start;
    overflow: hidden;
    border-radius: 2px;
    background: linear-gradient(#6aa5f3, #3a7be0 30%, #3170d8);
}

.tasks .active {
    background: #173f8d;
}

.lang {
    align-self: center;
    margin: 0 10px 0 8px;
}

.tray {
    display: flex;
    align-items: center;
    flex: none;
    gap: 2px;
    padding: 0 9px 0 8px;
    color: #10224f;
    background: linear-gradient(#b0d2f5, #7fb1ec 30%, #86b6ee);
}

.tray time {
    margin-left: 2px;
}

/* Seek bar and playback controls */
.seek {
    display: flex;
    align-items: center;
    flex: none;
    height: 12px;
    padding: 0 7px;
    border: solid #474d6c;
    border-width: 0 8px;
    border-bottom: 1px solid #1b1d29;
    border-top: 1px solid #7c829d;
    background: linear-gradient(#5b6180, #4c526c);
}

input[type="range"] {
    appearance: none;
}

.seek input {
    width: 100%;
    height: 3px;
    border-radius: 2px;
    background: linear-gradient(90deg, #1e68e4, #7fbcff) left / 26px 100% no-repeat, #4c526b;
}

.seek input::-webkit-slider-thumb {
    appearance: none;
    width: 1px;
    height: 1px;
}

.deck {
    position: relative;
    display: grid;
    grid-template-columns: 1fr 402px 1fr;
    flex: none;
    height: 56px;
    color: white;
    border: solid #303550;
    border-width: 0 2px;
    background: linear-gradient(#3e4254, #16181f 20px, #020205 22px, #000 49px, #29305a 51px, #2b3154);
}

.deck-shape {
    position: absolute;
    left: 50%;
    top: 0;
    width: 554px;
    height: 56px;
    margin-left: -277px;
}

.now {
    position: relative;
    display: flex;
    align-items: center;
    height: 48px;
    padding: 0 46px 0 15px;
}

.now svg {
    width: 17px;
    height: 18px;
}

.now span {
    margin-left: 19px;
}

.now time {
    margin-left: auto;
}

.transport {
    position: relative;
    display: flex;
    align-items: center;
    height: 32px;
    margin-top: 7px;
    padding: 0 14px 0 20px;
    border: 1px solid #22242f;
    border-bottom-color: #454857;
    border-radius: 16px;
}

.plain,
.plain svg {
    width: 20px;
    height: 20px;
}

.plain + .plain {
    margin-left: 11px;
}

.split {
    width: 1px;
    height: 19px;
    margin: 0 12px 0 13px;
    background-color: #22242e;
}

.skip {
    width: 52px;
    height: 25px;
    border: 1px solid #50566d;
    background: linear-gradient(#6d7690, #313644 50%, #14151c 52%);
}

.skip svg {
    width: 24px;
    height: 12px;
}

.prev {
    margin: 0 -3px 0 12px;
    border-radius: 8px 0 0 8px;
}

.next {
    margin-left: -3px;
    border-radius: 0 8px 8px 0;
}

.play {
    position: relative;
    flex: none;
    width: 46px;
    height: 46px;
}

.play svg {
    width: 46px;
    height: 46px;
}

.plain.volume-icon {
    margin: 0 15px 0 10px;
}

.volume {
    flex: 1;
    min-width: 0;
    height: 3px;
    border-bottom: 1px solid #676b7b;
    background: linear-gradient(#3f7fdc, #3f7fdc) left / 25% 100% no-repeat, #08080c;
}

.volume::-webkit-slider-thumb {
    appearance: none;
    width: 12px;
    height: 12px;
    border-radius: 50%;
    background: radial-gradient(circle at 50% 20%, #bcd8fb, #1c5fd8 50%, #4fa9f5);
}

.brand {
    position: relative;
    justify-self: end;
    padding: 3px 8px 0 0;
    color: #1fb1e4;
    font-family: "Liberation Mono", "Noto Sans CJK SC", monospace;
}

.brand strong {
    display: block;
    font-size: 29px;
    line-height: 32px;
}

.brand span {
    display: block;
    font-size: 13px;
    font-weight: bold;
    line-height: 14px;
}

.brand svg {
    position: absolute;
    right: 10px;
    top: 9px;
    width: 12px;
    height: 34px;
}
```
